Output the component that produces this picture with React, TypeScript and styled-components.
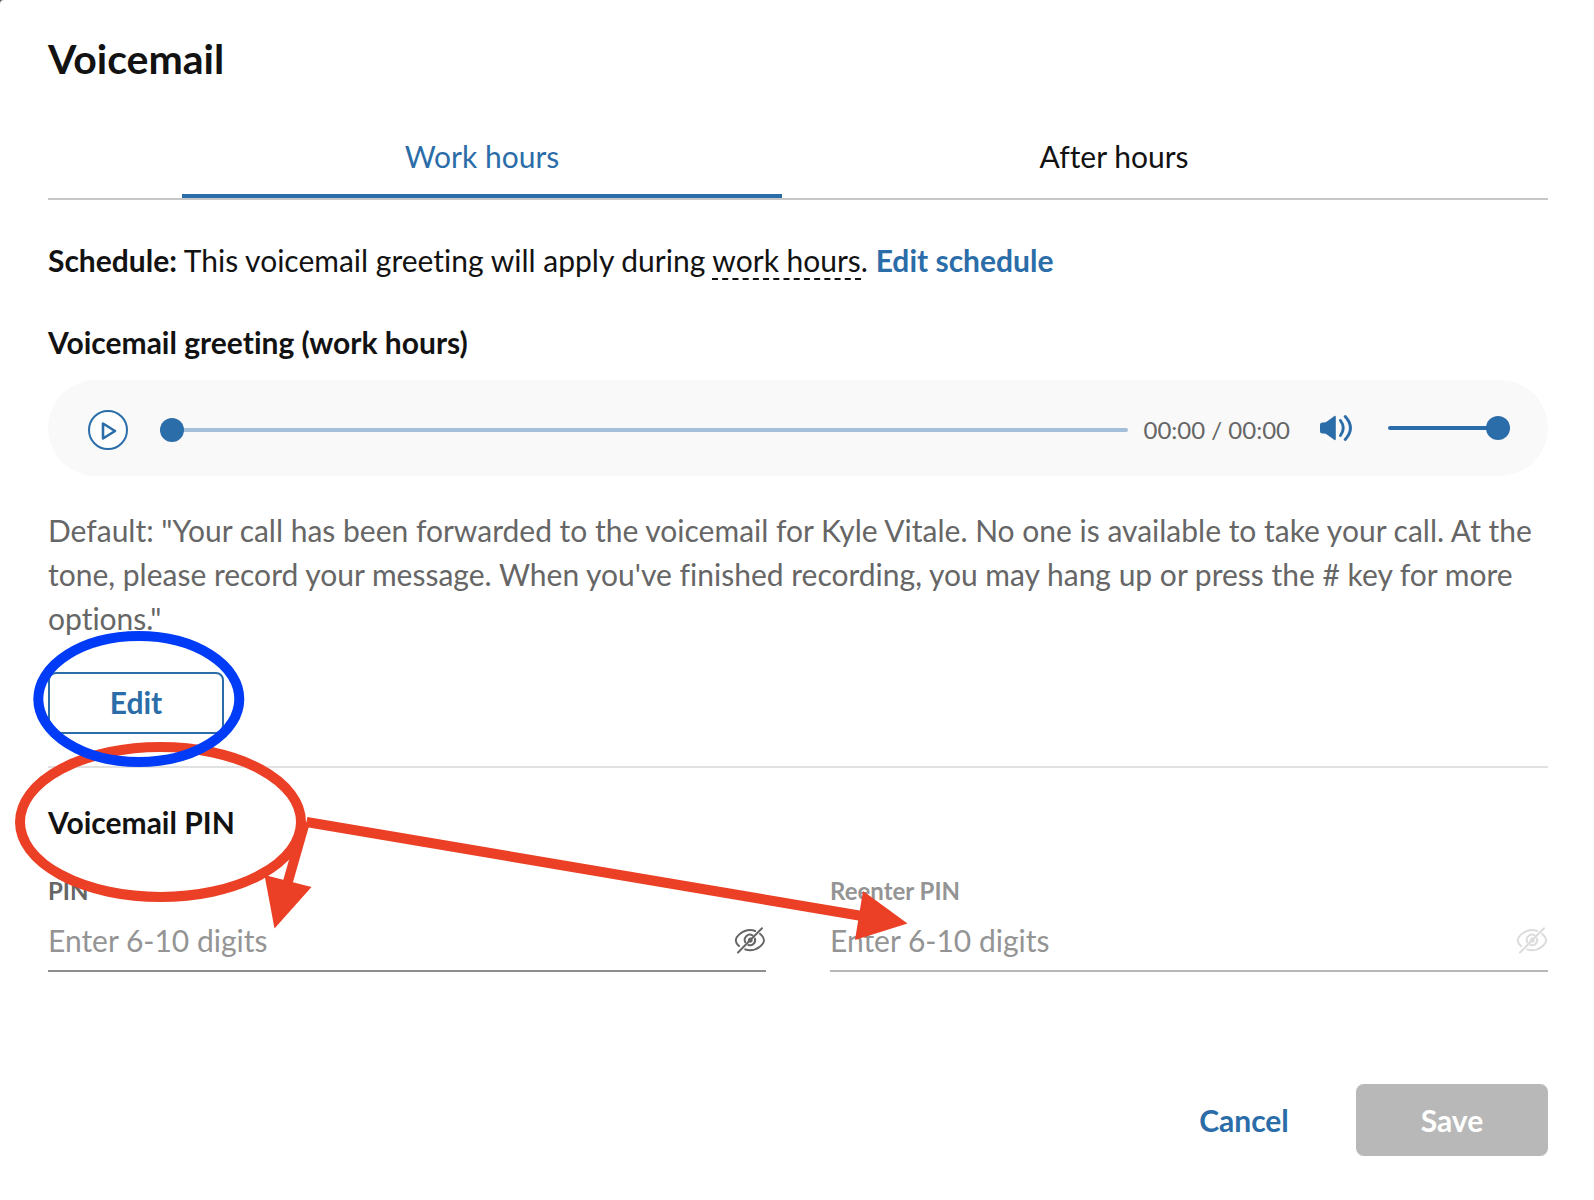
import React, { useState } from "react";
import styled, { createGlobalStyle, css } from "styled-components";

const color = {
  brand: "#2b6da8",
  brandSoft: "#a3bfda",
  text: "#121212",
  muted: "#666666",
  faint: "#949494",
  line: "#c7c7c7",
  divider: "#e1e1e1",
  disabled: "#b8b8b8",
  surface: "#f9f9f9",
  red: "#eb4026",
  blue: "#003cf7",
};

const GlobalStyle = createGlobalStyle`
  *, *::before, *::after { box-sizing: border-box; }
  body {
    margin: 0;
    background: #5f5f5f;
    font-family: Lato, "Open Sans", sans-serif;
    font-size: 30px;
    line-height: 44px;
    font-variant-ligatures: none;
    color: ${color.text};
  }
  button, input { font: inherit; font-variant-ligatures: none; color: inherit; }
  h1, h2, p { margin: 0; }
`;

const Dialog = styled.main`
  position: relative;
  display: flex;
  flex-direction: column;
  min-height: 100vh;
  padding: 32px 46px 44px 48px;
  background: #fff;
  border-top-left-radius: 4px;
  overflow: hidden;
`;

const Title = styled.h1`
  font-size: 41px;
  line-height: 54px;
  font-weight: 700;
`;

const TabList = styled.div`
  display: flex;
  justify-content: center;
  gap: 32px;
  margin-top: 32px;
  border-bottom: 2px solid ${color.line};
`;

const Tab = styled.button<{ $active?: boolean }>`
  flex: 0 1 600px;
  padding: 16px 0;
  padding-bottom: ${(p) => (p.$active ? 16 : 20)}px;
  border: 0;
  border-bottom: ${(p) => (p.$active ? `4px solid ${color.brand}` : "0")};
  background: none;
  color: ${(p) => (p.$active ? color.brand : color.text)};
  cursor: pointer;
`;

const Schedule = styled.p`
  margin-top: 38px;
`;

const Term = styled.span`
  border-bottom: 2px dashed ${color.text};
`;

const Link = styled.a`
  color: ${color.brand};
  font-weight: 700;
  text-decoration: none;
`;

const SectionTitle = styled.h2<{ $gap: number }>`
  margin-top: ${(p) => p.$gap}px;
  font-size: 30px;
  font-weight: 700;
`;

const Player = styled.div`
  display: flex;
  align-items: center;
  height: 96px;
  margin-top: 16px;
  padding: 0 38px 0 40px;
  border-radius: 48px;
  background: ${color.surface};
`;

const Playback = styled.div`
  flex: 1;
  display: flex;
  align-items: center;
  padding-top: 4px;
  margin-right: 30px;
`;

const PlayButton = styled.button`
  display: grid;
  place-items: center;
  width: 40px;
  height: 40px;
  margin-right: 32px;
  padding: 0;
  border: 2px solid ${color.brand};
  border-radius: 50%;
  background: #fff;
`;

const Slider = styled.input<{ $width?: number; $track: string }>`
  appearance: none;
  ${(p) =>
    p.$width
      ? css`
          flex: none;
          width: ${p.$width}px;
        `
      : css`
          flex: 1;
          min-width: 0;
        `}
  height: 24px;
  margin: 0;
  background: none;
  &::-webkit-slider-runnable-track {
    height: 4px;
    border-radius: 2px;
    background: ${(p) => p.$track};
  }
  &::-webkit-slider-thumb {
    appearance: none;
    width: 24px;
    height: 24px;
    margin-top: -10px;
    border-radius: 50%;
    background: ${color.brand};
  }
`;

const Time = styled.span`
  margin-left: 16px;
  font-size: 24px;
  line-height: 36px;
  color: ${color.muted};
  white-space: nowrap;
`;

const IconButton = styled.button`
  display: block;
  flex: none;
  height: 32px;
  padding: 0;
  border: 0;
  background: none;
  svg { display: block; }
`;

const MuteButton = styled(IconButton)`
  margin-right: 36px;
`;

const Greeting = styled.p`
  margin-top: 32px;
  color: ${color.muted};
`;

const EditButton = styled.button`
  align-self: flex-start;
  width: 176px;
  height: 62px;
  margin-top: 32px;
  padding: 0 0 2px;
  border: 2px solid ${color.brand};
  border-radius: 8px;
  background: #fff;
  color: ${color.brand};
  font-weight: 700;
`;

const Divider = styled.hr`
  width: 100%;
  height: 2px;
  margin: 32px 0 0;
  border: 0;
  background: ${color.divider};
`;

const Fields = styled.div`
  display: grid;
  grid-template-columns: 1fr 1fr;
  gap: 64px;
  margin-top: 28px;
`;

const Label = styled.label<{ $disabled?: boolean }>`
  display: block;
  margin-bottom: 8px;
  font-size: 24px;
  line-height: 38px;
  font-weight: 700;
  color: ${(p) => (p.$disabled ? color.faint : color.muted)};
`;

const InputRow = styled.div<{ $disabled?: boolean }>`
  display: flex;
  align-items: center;
  padding-bottom: 8px;
  border-bottom: 2px solid ${(p) => (p.$disabled ? color.disabled : "#8f8f8f")};
  color: ${(p) => (p.$disabled ? "#dcdcdc" : color.muted)};
`;

const Input = styled.input`
  flex: 1;
  min-width: 0;
  height: 44px;
  padding: 0;
  border: 0;
  outline: 0;
  background: none;
  color: ${color.text};
  &::placeholder { color: ${color.faint}; opacity: 1; }
`;

const Footer = styled.footer`
  display: flex;
  justify-content: flex-end;
  gap: 16px;
  margin-top: auto;
  padding-top: 40px;
`;

const ActionButton = styled.button<{ $filled?: boolean }>`
  width: 192px;
  height: 72px;
  padding: 0;
  border: 0;
  border-radius: 8px;
  background: ${(p) => (p.$filled ? color.disabled : "none")};
  color: ${(p) => (p.$filled ? "#fff" : color.brand)};
  font-weight: 700;
`;

const Markup = styled.svg`
  position: absolute;
  top: 0;
  left: 0;
  pointer-events: none;
`;

const PlayIcon = () => (
  <svg width="20" height="20" viewBox="0 0 20 20" fill="none" stroke={color.brand} strokeWidth="2.600" strokeLinejoin="round">
    <path d="M5 3.500v15l12-7.500z" />
  </svg>
);

const SpeakerIcon = () => (
  <svg width="32" height="32" viewBox="0 0 32 32" fill="none" stroke={color.brand} strokeWidth="2.900" strokeLinecap="round">
    <path d="M0 13q0-2.500 2.500-2.500h1.500q1.500 0 2.500-.8l7.300-5.300q2-1.400 2 .8v21.600q0 2.200-2 .8l-7.300-5.300q-1-.8-2.500-.8H2.500Q0 21.500 0 19z" fill={color.brand} stroke="none" />
    <path d="M20.500 8.500q5.500 7.500 0 15M25.200 4.500q10.500 11.500 0 23" />
  </svg>
);

const EyeOffIcon = () => (
  <svg width="32" height="32" viewBox="0 0 32 32" fill="none" stroke="currentColor" strokeWidth="2" strokeLinecap="round">
    <path d="M5 22C2.800 20 1.800 18 1.800 16.500 1.800 12.500 8.500 6 16 6c1.900 0 3.600.3 5.200 1M26 9.800c2.600 2.200 4 4.900 4 6.700C30 20 23.500 26.300 16 26.300c-1.800 0-3.400-.3-4.800-.9" />
    <path d="M11.300 18.300a5.200 5.200 0 0 1 7.200-6.900M20.900 14.500a5.200 5.200 0 0 1-6.600 6.500" />
    <path d="M14.800 16.800q0-2 2-2.300M17.500 15.500q.6 1.700-1.300 2.300" />
    <path d="M4 28.500L28 4.300" />
  </svg>
);

function PinField({ id, label, disabled }: { id: string; label: string; disabled?: boolean }) {
  const [visible, setVisible] = useState(false);
  return (
    <div>
      <Label htmlFor={id} $disabled={disabled}>{label}</Label>
      <InputRow $disabled={disabled}>
        <Input id={id} type={visible ? "text" : "password"} placeholder="Enter 6-10 digits" disabled={disabled} />
        <IconButton type="button" aria-label="Show PIN" disabled={disabled} onClick={() => setVisible(!visible)}>
          <EyeOffIcon />
        </IconButton>
      </InputRow>
    </div>
  );
}

export default function App() {
  const [tab, setTab] = useState("work");
  return (
    <>
      <GlobalStyle />
      <Dialog>
        <Title>Voicemail</Title>
        <TabList role="tablist">
          <Tab role="tab" aria-selected={tab === "work"} $active={tab === "work"} onClick={() => setTab("work")}>
            Work hours
          </Tab>
          <Tab role="tab" aria-selected={tab === "after"} $active={tab === "after"} onClick={() => setTab("after")}>
            After hours
          </Tab>
        </TabList>

        <Schedule>
          <strong>Schedule:</strong> This voicemail greeting will apply during <Term>work hours</Term>.{" "}
          <Link href="#schedule">Edit schedule</Link>
        </Schedule>

        <SectionTitle $gap={38}>Voicemail greeting (work hours)</SectionTitle>
        <Player>
          <Playback>
            <PlayButton type="button" aria-label="Play"><PlayIcon /></PlayButton>
            <Slider type="range" aria-label="Position" min={0} max={100} defaultValue={0} $track={color.brandSoft} />
            <Time>00:00 / 00:00</Time>
          </Playback>
          <MuteButton type="button" aria-label="Mute"><SpeakerIcon /></MuteButton>
          <Slider type="range" aria-label="Volume" min={0} max={100} defaultValue={100} $width={122} $track={color.brand} />
        </Player>

        <Greeting>
          Default: "Your call has been forwarded to the voicemail for Kyle Vitale. No one is available to take your
          call. At the tone, please record your message. When you've finished recording, you may hang up or press the #
          key for more options."
        </Greeting>
        <EditButton type="button">Edit</EditButton>

        <Divider />

        <SectionTitle $gap={32}>Voicemail PIN</SectionTitle>
        <Fields>
          <PinField id="pin" label="PIN" />
          <PinField id="pin-again" label="Reenter PIN" disabled />
        </Fields>

        <Footer>
          <ActionButton type="button">Cancel</ActionButton>
          <ActionButton type="button" $filled disabled>Save</ActionButton>
        </Footer>

        <Markup width="920" height="950" viewBox="0 0 920 950" fill="none" strokeWidth="10" aria-hidden="true">
          <g stroke={color.red}>
            <ellipse cx="160.500" cy="822" rx="140.500" ry="75" />
            <path d="M305 822L287 885M306.500 822L862 916" />
          </g>
          <path d="M264.500 875l47 12-37 41.500zM863 891l44.500 32.500L855 940z" fill={color.red} />
          <ellipse cx="138.800" cy="699" rx="100.500" ry="63" stroke={color.blue} />
        </Markup>
      </Dialog>
    </>
  );
}
